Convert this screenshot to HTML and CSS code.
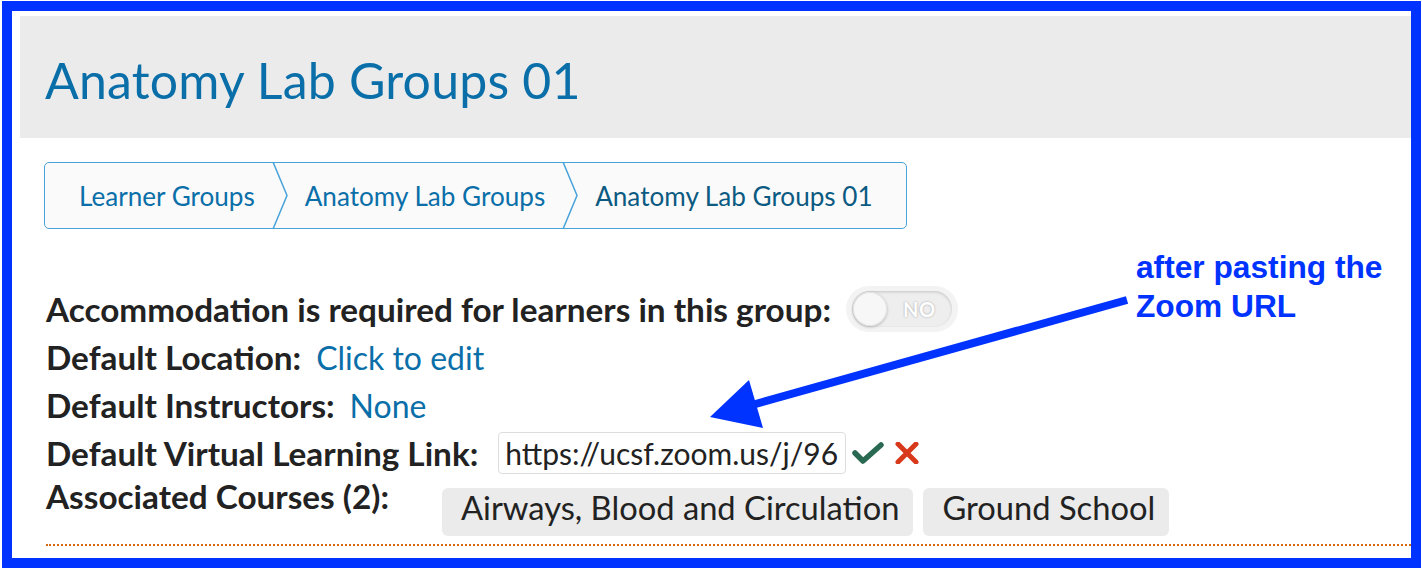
FILE: index.html
```html
<!DOCTYPE html>
<html lang="en">
<head>
<meta charset="utf-8">
<title>Anatomy Lab Groups 01</title>
<link rel="stylesheet" href="styles.css">
</head>
<body>
<div class="frame">
  <div class="page">
    <header class="page-header">
      <h1 class="title">Anatomy Lab Groups 01</h1>
    </header>
    <div class="content">
      <nav class="breadcrumbs">
        <a class="crumb crumb-first">Learner Groups</a>
        <svg class="crumb-sep" viewBox="0 0 16 67" width="16" height="67"><polyline points="1,0 15,33.5 1,67" fill="none" stroke="#47a3d9" stroke-width="1.5"/></svg>
        <a class="crumb">Anatomy Lab Groups</a>
        <svg class="crumb-sep" viewBox="0 0 16 67" width="16" height="67"><polyline points="1,0 15,33.5 1,67" fill="none" stroke="#47a3d9" stroke-width="1.5"/></svg>
        <span class="crumb crumb-last">Anatomy Lab Groups 01</span>
      </nav>
      <div class="details">
        <div class="row">
          <span class="label">Accommodation is required for learners in this group:</span>
          <span class="toggle"><span class="toggle-track"><span class="toggle-knob"></span><span class="toggle-text">NO</span></span></span>
        </div>
        <div class="row">
          <span class="label">Default Location:</span>
          <a class="value link">Click to edit</a>
        </div>
        <div class="row">
          <span class="label">Default Instructors:</span>
          <a class="value link">None</a>
        </div>
        <div class="row row-link">
          <span class="label">Default Virtual Learning Link:</span>
          <span class="url-input"><span class="url-text">https://ucsf.zoom.us/j/96</span></span>
          <svg class="icon-check" viewBox="0 0 32 22" width="32" height="22"><polyline points="3,11 11,19 29,3" fill="none" stroke="#2b6a52" stroke-width="5.5" stroke-linecap="round" stroke-linejoin="round"/></svg>
          <svg class="icon-x" viewBox="0 0 24 22" width="24" height="22"><path d="M3,2 L21,20 M21,2 L3,20" fill="none" stroke="#d8391b" stroke-width="5" stroke-linecap="round"/></svg>
        </div>
        <div class="row row-courses">
          <span class="label">Associated Courses (2):</span>
          <ul class="chips">
            <li class="chip">Airways, Blood and Circulation</li>
            <li class="chip">Ground School</li>
          </ul>
        </div>
      </div>
    </div>
  </div>
</div>
<svg class="arrow" viewBox="0 0 1422 570" width="1422" height="570">
  <line x1="1127" y1="300" x2="752" y2="405" stroke="#0033ff" stroke-width="8"/>
  <polygon points="710,417 749,380 763,428" fill="#0033ff"/>
</svg>
<div class="note">after pasting the<br>Zoom URL</div>
</body>
</html>
```
FILE: styles.css
```css
html, body {
  margin: 0;
  padding: 0;
  background: #ffffff;
}
body {
  position: relative;
  width: 1422px;
  height: 570px;
  overflow: hidden;
  font-family: "Lato", "Noto Sans", sans-serif;
  color: #222222;
}
.frame {
  margin: 1px 1px 0 2px;
  height: 547px;
  border: 10px solid #0033ff;
  overflow: hidden;
  background: #ffffff;
}
.page {
  padding: 5px 0 0 8px;
}
.page-header {
  background: #ebebeb;
  height: 122px;
  display: flex;
  align-items: center;
  padding: 6px 0 0 25px;
  box-sizing: border-box;
}
.title {
  margin: 0;
  font-size: 50px;
  font-weight: 400;
  color: #0a6fa9;
  letter-spacing: 0.2px;
}
.content {
  padding: 24px 0 0 24px;
}
.breadcrumbs {
  display: inline-flex;
  align-items: center;
  height: 65px;
  border: 1px solid #47a3d9;
  border-radius: 5px;
  background: #fafafa;
}
.crumb {
  font-size: 26.1px;
  color: #0a6fa9;
  padding: 0 17px 0 17px;
  white-space: nowrap;
}
.crumb-first {
  padding-left: 34px;
  padding-right: 17px;
}
.crumb-last {
  color: #0b5a82;
  padding-right: 33px;
}
.crumb-sep {
  display: block;
  flex: none;
  height: 67px;
  margin: -1px 0;
}
.details {
  padding: 56px 0 0 2px;
  display: flex;
  flex-direction: column;
}
.row {
  display: flex;
  align-items: center;
  height: 48px;
  font-size: 33.3px;
}
.label {
  font-weight: 700;
  white-space: nowrap;
}
.value {
  margin-left: 15px;
  font-size: 32px;
}
.link {
  color: #0a6fa9;
}
.toggle {
  margin-left: 15px;
  padding: 5px 6px;
  border-radius: 24px;
  background: #f3f3f3;
}
.toggle-track {
  display: flex;
  align-items: center;
  width: 100px;
  height: 36px;
  border-radius: 18px;
  background: #eeeeee;
  box-shadow: inset 0 1px 3px rgba(0,0,0,0.18);
}
.toggle-knob {
  width: 34px;
  height: 34px;
  margin-left: 1px;
  border-radius: 50%;
  background: #f7f7f7;
  box-shadow: 0 1px 3px rgba(0,0,0,0.25), inset 0 0 0 1px #e2e2e2;
}
.toggle-text {
  margin-left: 16px;
  font-size: 20px;
  font-weight: 700;
  color: #ffffff;
  text-shadow: 0 0 2px #9a9a9a;
  letter-spacing: 0.5px;
}
.url-input {
  display: block;
  margin-left: 20px;
  width: 334px;
  height: 40px;
  padding: 0 6px;
  border: 1px solid #dddddd;
  border-radius: 4px;
  overflow: hidden;
  background: #ffffff;
  font-size: 30px;
  line-height: 40px;
  white-space: nowrap;
  color: #222222;
}
.icon-check {
  margin-left: 6px;
  display: block;
}
.icon-x {
  margin-left: 11px;
  display: block;
}
.row-courses {
  align-items: flex-start;
  height: 67px;
  border-bottom: 2px dotted #d4690e;
}
.row-courses .label {
  line-height: 38px;
}
.chips {
  display: flex;
  gap: 10px;
  list-style: none;
  margin: 11px 0 0 53px;
  padding: 0;
}
.chip {
  background: #ebebeb;
  border-radius: 6px;
  height: 40px;
  line-height: 40px;
  padding: 0 14px 8px 19px;
  font-size: 32.7px;
  white-space: nowrap;
}
.arrow {
  position: absolute;
  left: 0;
  top: 0;
  pointer-events: none;
}
.note {
  position: absolute;
  left: 1136px;
  top: 248px;
  font-family: "Liberation Sans", Arial, sans-serif;
  font-weight: 700;
  font-size: 31.7px;
  line-height: 39px;
  color: #0033ff;
}
```
